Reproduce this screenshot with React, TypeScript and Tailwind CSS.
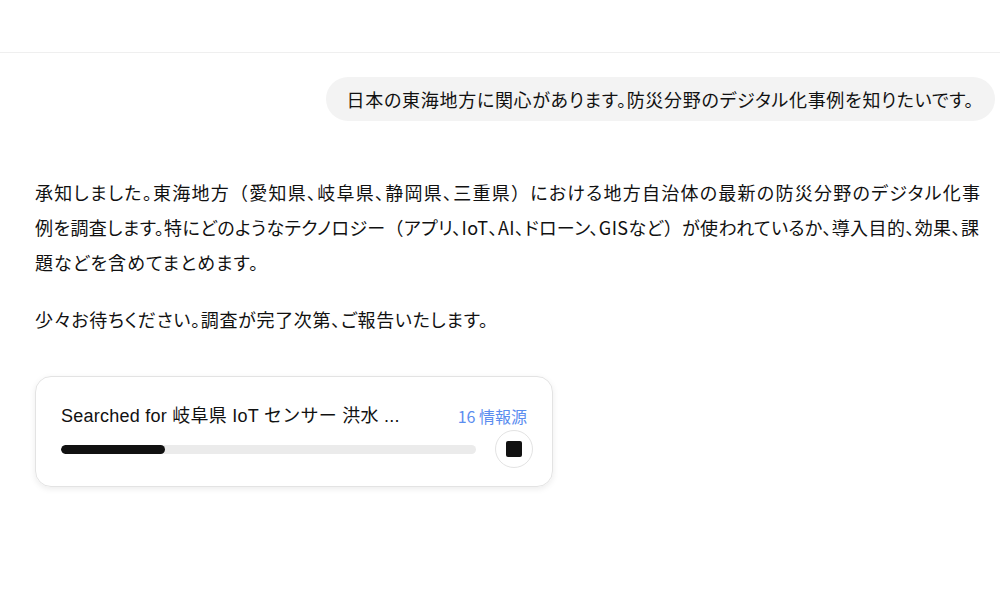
export default function App() {
  const progress = 25;
  const paren = "[font-feature-settings:normal]";

  return (
    <div
      className="h-[600px] w-[1000px] overflow-hidden bg-white text-[#111]"
      style={{ fontFamily: '"Noto Sans CJK JP", "Noto Sans", sans-serif' }}
    >
      <header className="h-[53px] border-b border-[#efefef]" />

      <main className="flex flex-col pl-[35px] pr-[5px]">
        <div className="mt-[24px] flex h-[44px] items-center self-end rounded-full bg-[#f3f3f3] px-[21px] text-[18px] tracking-[0.7px] [font-feature-settings:'palt']">
          日本の東海地方に関心があります。防災分野のデジタル化事例を知りたいです。
        </div>

        <div className="text-[18px] leading-[35px] [font-feature-settings:'palt']">
          <p className="mt-[54px] whitespace-nowrap">
            <span className="block tracking-[1.25px]">
              承知しました。東海地方<span className={paren}>（</span>愛知県、岐阜県、静岡県、三重県
              <span className={paren}>）</span>における地方自治体の最新の防災分野のデジタル化事
            </span>
            <span className="block tracking-[0.4px]">
              例を調査します。特にどのようなテクノロジー<span className={paren}>（</span>アプリ、IoT、AI、ドローン、GISなど
              <span className={paren}>）</span>が使われているか、導入目的、効果、課
            </span>
            <span className="block tracking-[1px]">題などを含めてまとめます。</span>
          </p>

          <p className="mt-[22px] tracking-[0.7px]">少々お待ちください。調査が完了次第、ご報告いたします。</p>
        </div>

        <div className="mt-[39px] w-[518px] rounded-[16px] border border-[#e3e3e3] pb-[18px] pl-[25px] pr-[19px] pt-[26px] shadow-[0_2px_6px_rgba(0,0,0,0.08)]">
          <div className="flex items-center justify-between pr-[6px]">
            <span
              className="text-[18px] leading-[26px] tracking-[0.25px]"
              style={{ fontFamily: '"Liberation Sans", "Noto Sans CJK JP", sans-serif' }}
            >
              Searched for 岐阜県 IoT センサー 洪水 ...
            </span>
            <span className="text-[16px] leading-[26px] text-[#5b8def]">16 情報源</span>
          </div>
          <div className="mt-[1px] flex items-center gap-[19px]">
            <div className="h-[9px] flex-1 overflow-hidden rounded-full bg-[#ebebeb]">
              <div className="h-full rounded-full bg-[#111]" style={{ width: `${progress}%` }} />
            </div>
            <button className="flex h-[38px] w-[38px] items-center justify-center rounded-full border border-[#e3e3e3] bg-white">
              <span className="h-[16px] w-[16px] rounded-[2px] bg-[#111]" />
            </button>
          </div>
        </div>
      </main>
    </div>
  );
}
